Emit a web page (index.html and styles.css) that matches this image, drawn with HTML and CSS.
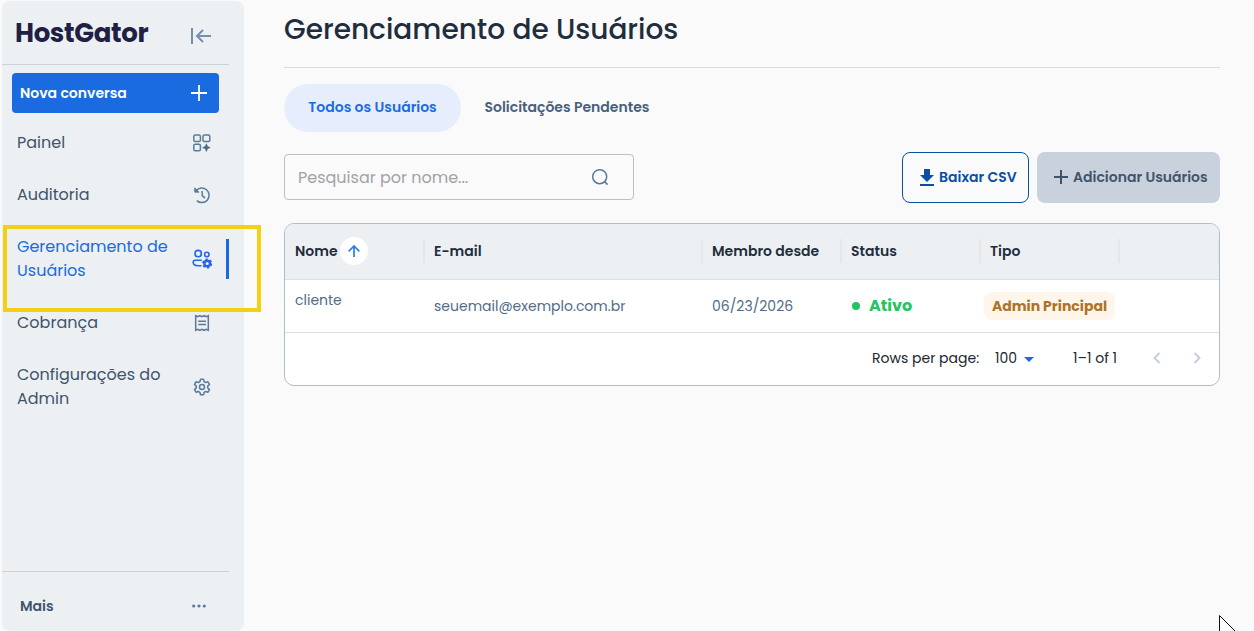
FILE: index.html
```html
<!DOCTYPE html>
<html lang="pt-BR">
<head>
  <meta charset="UTF-8" />
  <title>Gerenciamento de Usuários</title>
  <link rel="stylesheet" href="styles.css">
</head>
<body>

<aside class="sidebar">
  <div class="brand">
    <span class="logo">HostGator</span>
    <svg class="collapse" width="22" height="18" viewBox="0 0 22 18" fill="none" stroke="#7590ac" stroke-width="2">
      <path d="M2 1v16M21 9H7M13 3L7 9l6 6" />
    </svg>
  </div>

  <button class="new-chat">
    <span>Nova conversa</span>
    <svg width="16" height="16" viewBox="0 0 16 16" stroke="#fff" stroke-width="1.8"><path d="M8 0v16M0 8h16" /></svg>
  </button>

  <nav class="menu">
    <a class="item">
      <span class="label">Painel</span>
      <svg width="20" height="20" viewBox="0 0 20 20" fill="none" stroke="#5b7a9b" stroke-width="1.5">
        <rect x="1.8" y="2" width="6.6" height="6.6" rx="1.4" />
        <rect x="11" y="2" width="6.8" height="6.6" rx="1.4" />
        <rect x="1.8" y="11.2" width="6.6" height="6.6" rx="1.4" />
        <path d="M14.4 10.8l1.1 2.7 2.7 1.1-2.7 1.1-1.1 2.7-1.1-2.7-2.7-1.1 2.7-1.1z" fill="#46688c" stroke="#46688c" stroke-width=".6" />
      </svg>
    </a>
    <a class="item">
      <span class="label">Auditoria</span>
      <svg width="20" height="20" viewBox="0 0 20 20" fill="none" stroke="#5b7a9b" stroke-width="1.5">
        <path d="M4.1 5.7A7.3 7.3 0 1 1 4.8 15.6" />
        <path d="M10.2 6v4.6l2.8 2.5" />
        <path d="M2.7 2.8v4.4h4.4z" fill="#5b7a9b" stroke-width=".8" />
      </svg>
    </a>
    <a class="item active">
      <span class="label">Gerenciamento de Usuários</span>
      <svg width="20" height="20" viewBox="0 0 20 20" fill="none" stroke="#2563eb" stroke-width="1.6">
        <circle cx="6.2" cy="4.6" r="3.2" />
        <circle cx="14.8" cy="5.5" r="2.2" />
        <path d="M9.8 11.3H3.2a2 2 0 0 0-2 2c0 2.2 2.2 3.4 5 3.4h3.3" />
        <circle cx="15.2" cy="14.5" r="2.8" stroke-width="2.4" />
        <circle cx="15.2" cy="14.5" r="4.2" stroke-width="1.8" stroke-dasharray="2.2 2.2" />
      </svg>
      <i class="marker"></i>
    </a>
    <a class="item">
      <span class="label">Cobrança</span>
      <svg width="20" height="20" viewBox="0 0 20 20" fill="none" stroke="#5b7a9b" stroke-width="1.5">
        <path d="M3.7 17.3V2.7l2 1 2.1-1 2.2 1 2.2-1 2.1 1 2-1v14.6l-2-1-2.1 1-2.2-1-2.2 1-2.1-1z" />
        <path d="M6.2 8.3h7.8M6.2 11.5h7.8" />
      </svg>
    </a>
    <a class="item">
      <span class="label">Configurações do Admin</span>
      <svg width="20" height="20" viewBox="0 0 20 20" fill="none" stroke="#5b7a9b" stroke-width="1.5" stroke-linejoin="round">
        <path d="M8.5 2.3h3l.6 2.4 1.5.8 2.4-.7 1.5 2.6-1.8 1.7v1.8l1.8 1.7-1.5 2.6-2.4-.7-1.5.8-.6 2.4h-3l-.6-2.4-1.5-.8-2.4.7-1.5-2.6 1.8-1.7V9.1L2.5 7.4 4 4.8l2.4.7 1.5-.8z" />
        <circle cx="10" cy="10" r="2.5" />
      </svg>
    </a>
  </nav>

  <div class="more">
    <span>Mais</span>
    <svg width="14" height="4" viewBox="0 0 14 4" fill="#5b7a9b">
      <circle cx="1.7" cy="2" r="1.6" /><circle cx="7" cy="2" r="1.6" /><circle cx="12.3" cy="2" r="1.6" />
    </svg>
  </div>
</aside>

<main class="content">
  <h1>Gerenciamento de Usuários</h1>

  <div class="tabs">
    <button class="tab selected">Todos os Usuários</button>
    <button class="tab">Solicitações Pendentes</button>
  </div>

  <div class="toolbar">
    <div class="search">
      <span>Pesquisar por nome...</span>
      <svg width="18" height="18" viewBox="0 0 18 18" fill="none" stroke="#5b7a9b" stroke-width="1.5">
        <circle cx="8.7" cy="8.7" r="7" /><path d="M13.6 13.6l3 3" />
      </svg>
    </div>
    <button class="download">
      <svg width="14" height="17" viewBox="0 0 14 17" fill="#0b4fa0"><path d="M4 0h6v6h4l-7 7-7-7h4zM0 15h14v2H0z" /></svg>
      <span>Baixar CSV</span>
    </button>
    <button class="add">
      <svg width="14" height="14" viewBox="0 0 14 14" stroke="#3f546b" stroke-width="2"><path d="M7 0v14M0 7h14" /></svg>
      <span>Adicionar Usuários</span>
    </button>
  </div>

  <div class="grid">
    <div class="row head">
      <div class="cell">
        <span>Nome</span>
        <span class="sort"><svg width="12" height="12" viewBox="0 0 12 12" fill="none" stroke="#2f7be8" stroke-width="1.7"><path d="M6 12V1M.7 6.3L6 1l5.3 5.3" /></svg></span>
      </div>
      <div class="cell">E-mail</div>
      <div class="cell">Membro desde</div>
      <div class="cell">Status</div>
      <div class="cell">Tipo</div>
      <div class="cell"></div>
    </div>
    <div class="row">
      <div class="cell name">cliente</div>
      <div class="cell">seuemail@exemplo.com.br</div>
      <div class="cell">06/23/2026</div>
      <div class="cell status"><i class="dot"></i><span>Ativo</span></div>
      <div class="cell type"><span class="badge">Admin Principal</span></div>
      <div class="cell"></div>
    </div>
    <div class="pager">
      <span class="per-page">Rows per page:</span>
      <span class="count">100</span>
      <svg class="caret" width="10" height="5" viewBox="0 0 10 5" fill="#1a6be0"><path d="M0 0h10L5 5z" /></svg>
      <span class="range">1–1 of 1</span>
      <svg class="prev" width="8" height="12" viewBox="0 0 8 12" fill="none" stroke="#c3cddb" stroke-width="1.9"><path d="M6.5 1l-5 5 5 5" /></svg>
      <svg class="next" width="8" height="12" viewBox="0 0 8 12" fill="none" stroke="#c3cddb" stroke-width="1.9"><path d="M1.5 1l5 5-5 5" /></svg>
    </div>
  </div>
</main>

<div class="highlight"></div>
<svg class="cursor" width="17" height="16" viewBox="0 0 17 16"><path d="M.5.5L17 17V22H.5z" fill="#fff" stroke="#111" /></svg>

</body>
</html>
```

FILE: styles.css
```css
* {
  box-sizing: border-box;
}
body {
  margin: 0;
  height: 631px;
  display: flex;
  overflow: hidden;
  position: relative;
  background: #fafafa;
  font-family: Poppins, Inter, sans-serif;
  font-size: 14px;
  color: #1f2d3d;
}
svg {
  display: block;
  flex: none;
}
button {
  font: inherit;
  border: none;
  background: none;
  white-space: nowrap;
}
.sidebar {
  width: 242px;
  height: 630px;
  margin: 1px 0 0 2px;
  padding-right: 15px;
  border-radius: 8px;
  background: #ecf0f3;
  display: flex;
  flex-direction: column;
  flex: none;
}
.brand {
  height: 64px;
  padding: 0 17px 0 13px;
  border-bottom: 1px solid #cbd3d9;
  display: flex;
  justify-content: space-between;
}
.logo {
  font-size: 26px;
  font-weight: 700;
  line-height: 65px;
  letter-spacing: -0.35px;
  color: #1f2044;
}
.collapse {
  margin-top: 26px;
}
.new-chat {
  height: 40px;
  margin: 8px 10px 0 10px;
  padding: 0 12px 0 8px;
  border-radius: 4px;
  background: #1a6be0;
  color: #fff;
  font-weight: 600;
  display: flex;
  align-items: center;
  justify-content: space-between;
}
.menu {
  margin-top: 4px;
}
.item {
  padding: 14px 0 14px 15px;
  display: flex;
  align-items: center;
  color: #3f546b;
  font-size: 16px;
  line-height: 24px;
}
.item svg {
  margin-left: 10px;
}
.label {
  width: 165px;
}
.active {
  color: #1a6be0;
}
.marker {
  width: 3px;
  height: 40px;
  margin-left: 14px;
  background: #1a6be0;
}
.more {
  margin-top: auto;
  height: 60px;
  padding: 10px 23px 0 18px;
  border-top: 1px solid #cbd3d9;
  display: flex;
  align-items: center;
  justify-content: space-between;
  font-weight: 600;
  color: #3f546b;
}
.more svg {
  margin-bottom: 2px;
}
.content {
  flex: 1;
  padding: 0 34px 0 40px;
}
h1 {
  margin: 0;
  height: 68px;
  border-bottom: 1px solid #d9dcde;
  font-size: 28px;
  font-weight: 500;
  line-height: 60px;
  white-space: nowrap;
}
.tabs {
  margin-top: 16px;
  display: flex;
}
.tab {
  height: 48px;
  padding: 0 0 2px 23.5px;
  font-weight: 600;
  color: #46607a;
}
.selected {
  width: 177px;
  padding: 0 0 2px;
  border-radius: 24px;
  background: #e6edfd;
  color: #1a6be0;
}
.toolbar {
  height: 51px;
  margin-top: 20px;
  display: flex;
  align-items: center;
}
.search {
  width: 350px;
  height: 46px;
  margin-right: auto;
  margin-bottom: 1px;
  padding: 0 24px 0 13px;
  border: 1px solid #bfbfbf;
  border-radius: 4px;
  display: flex;
  align-items: center;
  justify-content: space-between;
  font-size: 16px;
  color: #9fa3a8;
}
.download, .add {
  height: 51px;
  padding: 0;
  border-radius: 8px;
  display: flex;
  align-items: center;
  font-weight: 600;
}
.download svg, .add svg {
  margin-bottom: 1px;
}
.download {
  width: 127px;
  padding-left: 17px;
  gap: 5px;
  border: 1px solid #0b4fa0;
  color: #0b4fa0;
}
.add {
  width: 183px;
  margin-left: 8px;
  padding-left: 17px;
  gap: 5px;
  background: #c9d1dd;
  color: #3f546b;
}
.grid {
  margin-top: 20px;
  border: 1px solid #afbccb;
  border-radius: 10px;
  background: #fff;
  overflow: hidden;
}
.row {
  height: 53px;
  display: grid;
  grid-template-columns: 139px 278px 139px 139px 139px 1fr;
  border-bottom: 1px solid #dfe0e1;
}
.cell {
  padding-left: 10px;
  display: flex;
  align-items: center;
  color: #526b87;
  white-space: nowrap;
}
.head {
  height: 56px;
  background: #ecf0f3;
}
.head .cell {
  font-weight: 600;
  color: #1f2d3d;
}
.head .cell::after {
  content: "";
  width: 2px;
  height: 24px;
  margin: 0 -1px 1px auto;
  background: #e5e8ea;
}
.sort {
  width: 28px;
  height: 28px;
  margin: 0 0 1px 2px;
  border-radius: 50%;
  background: #fff;
  display: flex;
  align-items: center;
  justify-content: center;
}
.name {
  padding-bottom: 12px;
}
.status {
  font-size: 16px;
  font-weight: 700;
  color: #22c55e;
}
.status span {
  margin-bottom: 2px;
}
.dot {
  width: 8px;
  height: 8px;
  margin: 0 9px 0 1px;
  border-radius: 50%;
  background: #22c55e;
}
.type {
  padding-left: 4px;
}
.badge {
  width: 131px;
  height: 28px;
  border-radius: 8px;
  background: #fef6ea;
  color: #ad7328;
  font-weight: 700;
  line-height: 28px;
  text-align: center;
}
.pager {
  height: 52px;
  padding: 0 18px 2px 0;
  display: flex;
  align-items: center;
  justify-content: flex-end;
  color: #20262d;
}
.per-page {
  width: 108px;
}
.count {
  width: 24px;
  margin-left: 15px;
}
.caret {
  margin-left: 5px;
  margin-top: 3px;
}
.range {
  width: 45px;
  margin-left: 39px;
  white-space: nowrap;
}
.prev {
  margin-left: 35px;
}
.next {
  margin-left: 32px;
}
/* callout frame over the active menu entry */
.highlight {
  position: absolute;
  left: 3px;
  top: 225px;
  width: 258px;
  height: 87px;
  border: 4px solid #f4d013;
}
.cursor {
  position: absolute;
  left: 1219px;
  top: 615px;
}
```
